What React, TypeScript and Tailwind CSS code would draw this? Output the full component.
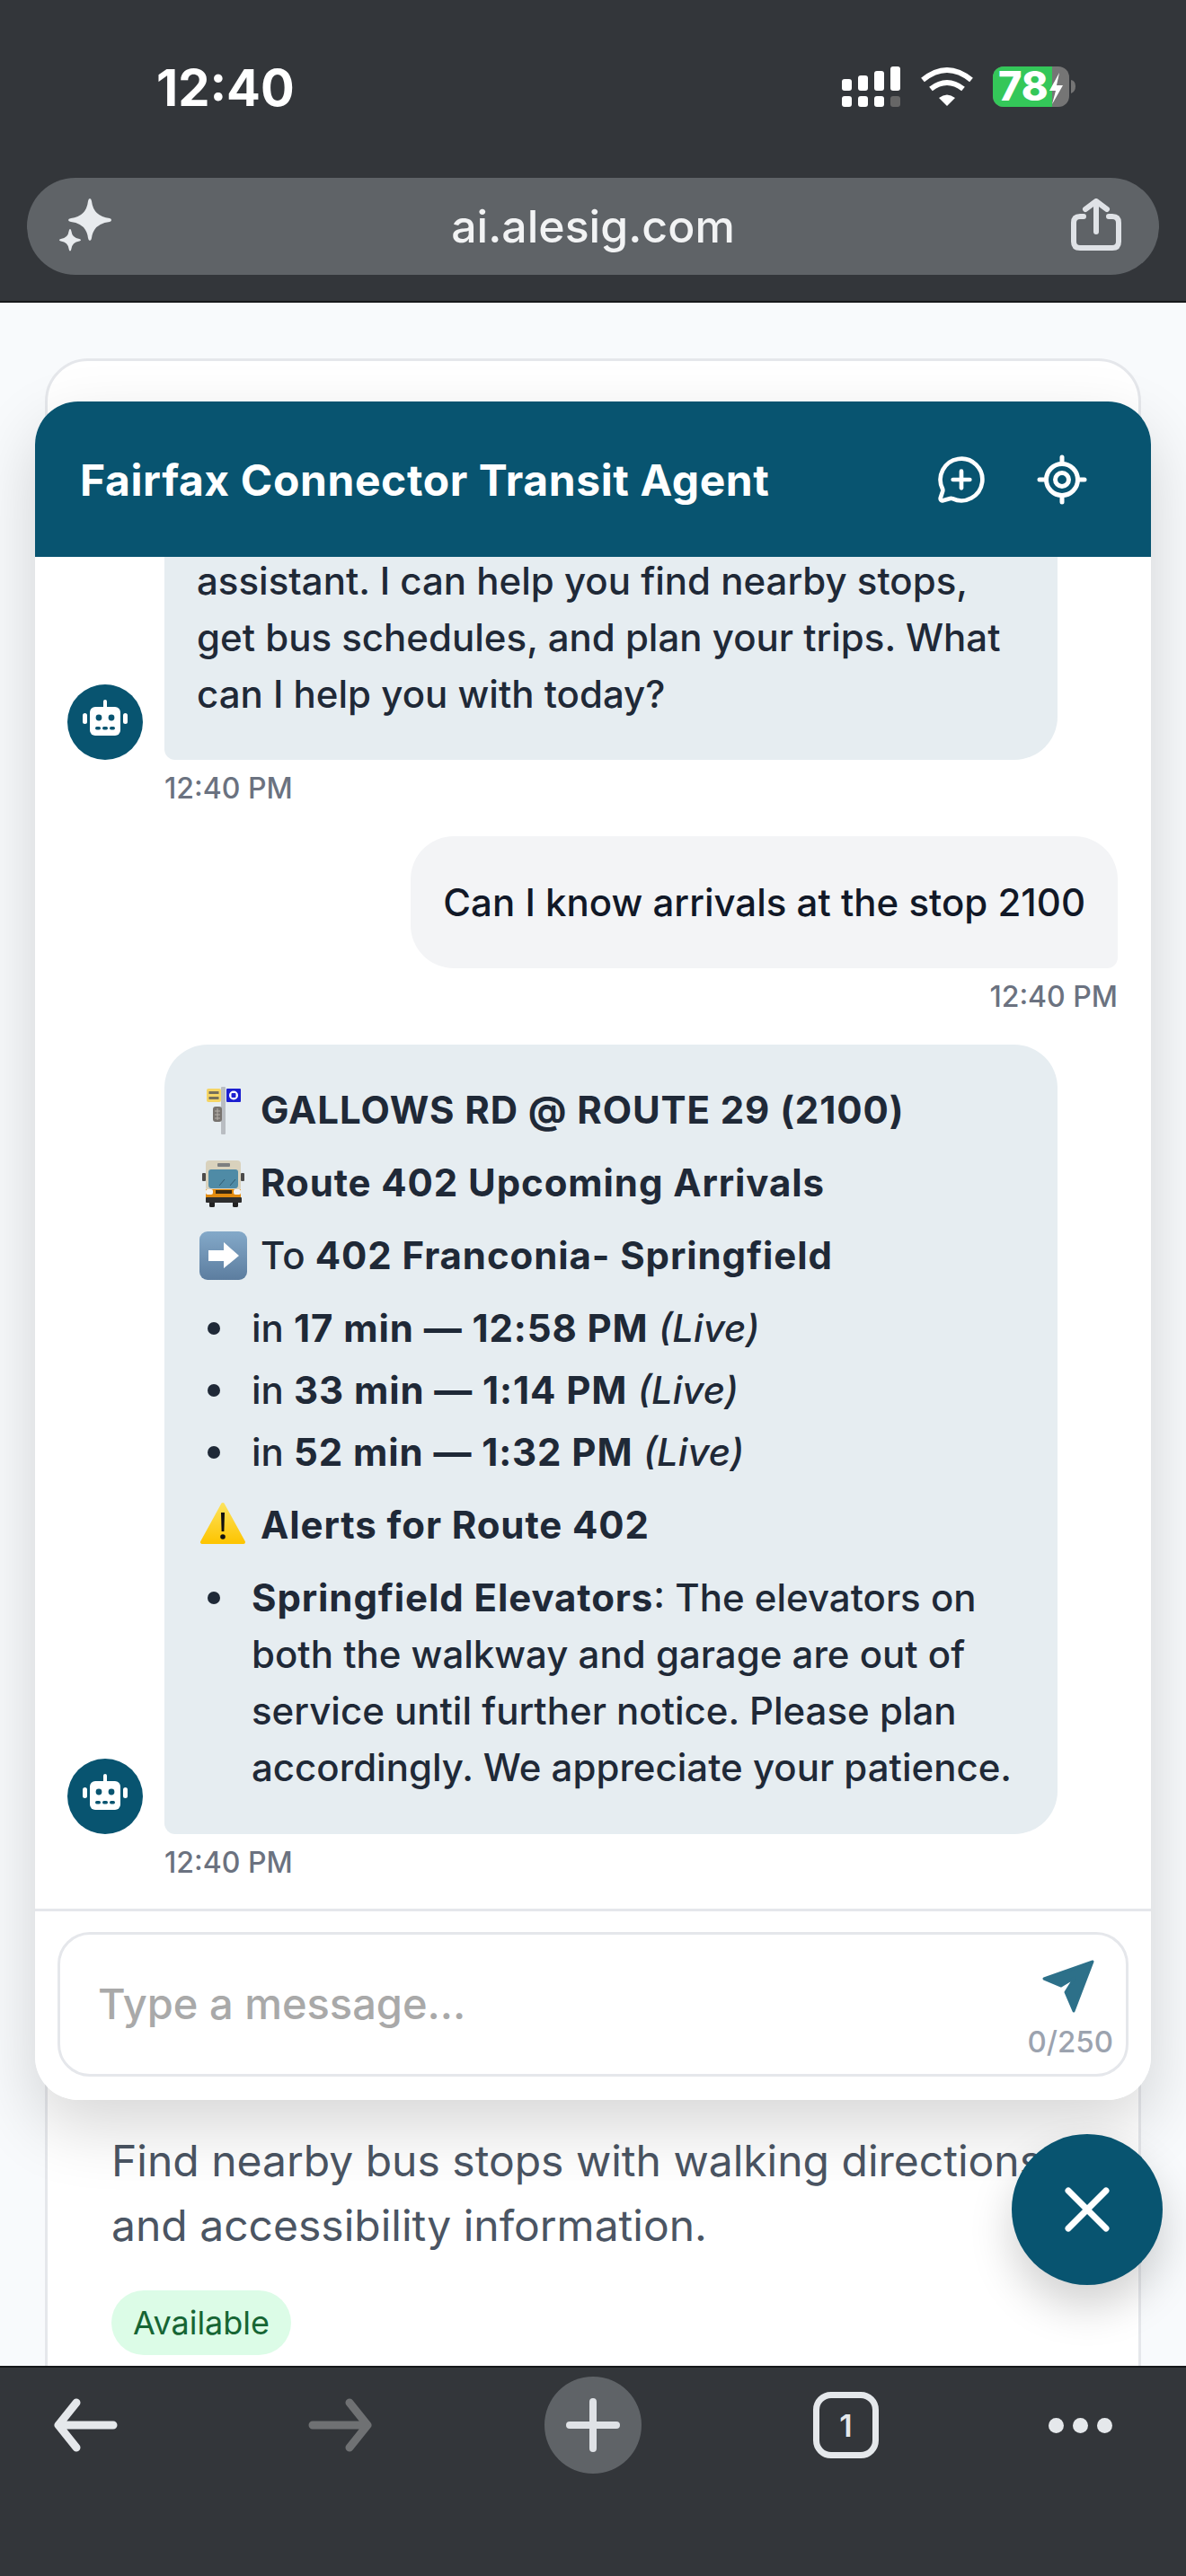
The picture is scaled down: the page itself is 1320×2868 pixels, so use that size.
import React from 'react';
import { LocateFixed, MessageCirclePlus, X } from 'lucide-react';

const Robot = () => (
    <div className="w-[84px] h-[84px] shrink-0 rounded-full bg-[#085470] flex items-center justify-center">
        <svg width="56" height="56" viewBox="0 0 56 56">
            <rect x="26" y="3" width="4" height="12" rx="2" fill="#fff" />
            <rect x="11" y="11" width="34" height="32" rx="6" fill="#fff" />
            <rect x="3" y="18" width="5" height="12" rx="2.5" fill="#fff" />
            <rect x="48" y="18" width="5" height="12" rx="2.5" fill="#fff" />
            <circle cx="21" cy="23" r="3.4" fill="#085470" />
            <circle cx="35" cy="23" r="3.4" fill="#085470" />
            <rect x="17" y="33" width="6" height="3.4" rx="1.7" fill="#085470" />
            <rect x="25" y="33" width="6" height="3.4" rx="1.7" fill="#085470" />
            <rect x="33" y="33" width="6" height="3.4" rx="1.7" fill="#085470" />
        </svg>
    </div>
);

const StopEmoji = () => (
    <svg width="56" height="56" viewBox="0 0 56 56" className="shrink-0 mr-[14px]">
        <rect x="26" y="2" width="5" height="53" rx="1" fill="#b9bdc2" />
        <rect x="10" y="4" width="16" height="15" rx="2" fill="#f5d565" />
        <rect x="12.5" y="7" width="11" height="3" fill="#77705a" />
        <rect x="12.5" y="13" width="11" height="3" fill="#77705a" />
        <rect x="32" y="4" width="16" height="15" rx="1" fill="#1c1fd0" />
        <circle cx="40" cy="11.5" r="5" fill="#fff" />
        <rect x="37.5" y="9" width="5" height="5" rx="1" fill="#1c1fd0" />
        <rect x="17" y="24" width="10" height="17" rx="3" fill="#77736f" />
        <path d="M19 29h6M19 33h6M19 37h6M22 26v13" stroke="#b5b0aa" strokeWidth="1" />
    </svg>
);

const BusEmoji = () => (
    <svg width="56" height="56" viewBox="0 0 56 56" className="shrink-0 mr-[14px]">
        <rect x="5" y="17" width="4" height="9" rx="1" fill="#4b4b4b" />
        <rect x="48" y="17" width="4" height="9" rx="1" fill="#4b4b4b" />
        <rect x="13" y="46" width="6" height="9" rx="1.5" fill="#222" />
        <rect x="39" y="46" width="6" height="9" rx="1.5" fill="#222" />
        <rect x="9" y="3" width="39" height="34" rx="4" fill="#d9d2bd" />
        <rect x="22" y="6" width="14" height="4" rx="1" fill="#7d7f80" />
        <path d="M12 16q0-3 3-3h27q3 0 3 3v14q0 4-3 4H15q-3 0-3-4Z" fill="#4f8ba6" />
        <path d="M24 31l6-7M36 31l6-7" stroke="#2f5a70" strokeWidth="1" />
        <rect x="9" y="35" width="39" height="10" fill="#e08a10" />
        <rect x="20" y="36" width="18" height="4" fill="#3a2a12" />
        <rect x="9" y="35" width="8" height="6" rx="2" fill="#f2f2f2" />
        <rect x="40" y="35" width="8" height="6" rx="2" fill="#f2f2f2" />
        <rect x="9" y="44" width="40" height="6" rx="1" fill="#2e2e2e" />
    </svg>
);

const ArrowEmoji = () => (
    <svg width="56" height="56" viewBox="0 0 56 56" className="shrink-0 mr-[14px]">
        <defs>
            <linearGradient id="tile" x1="0" y1="0" x2="0" y2="1">
                <stop offset="0" stopColor="#84a9c9" />
                <stop offset="1" stopColor="#5c7d9f" />
            </linearGradient>
        </defs>
        <rect x="2" y="1" width="53" height="54" rx="9" fill="url(#tile)" />
        <path d="M12 22h17v-9l17 15-17 14v-8H12Z" fill="#fff" />
    </svg>
);

const WarnEmoji = () => (
    <svg width="56" height="56" viewBox="0 0 56 56" className="shrink-0 mr-[14px]">
        <defs>
            <linearGradient id="warn" x1="0" y1="0" x2="0" y2="1">
                <stop offset="0" stopColor="#fde25a" />
                <stop offset="1" stopColor="#fdc503" />
            </linearGradient>
        </defs>
        <path d="M28 5 5 47h46Z" fill="url(#warn)" stroke="url(#warn)" strokeWidth="4" strokeLinejoin="round" />
        <path d="M26 14h4l-.6 21h-2.8Z" fill="#111" />
        <circle cx="28" cy="41" r="2.8" fill="#111" />
    </svg>
);

const Time = ({ right }: { right?: boolean }) => (
    <div className={`text-[32px] leading-[45px] text-[#6b7280] mt-[9px] ${right ? 'text-right' : 'pl-[108px]'}`}>12:40 PM</div>
);

const Bullet = ({ children }: { children: React.ReactNode }) => (
    <li className="flex">
        <span className="w-[14px] h-[14px] shrink-0 rounded-full bg-[#1f2937] mt-[25px] ml-[11px] mr-[35px]" />
        <div>{children}</div>
    </li>
);

export default function App() {
    return (
        <div className="relative w-[1320px] h-[2868px] overflow-hidden bg-[#f8fafc] font-['Inter',sans-serif] text-[#1f2937]">
            {/* Browser top */}
            <div className="h-[337px] bg-[#33363a] px-[30px] border-b-2 border-[#16181a]">
                <div className="h-[198px] flex items-start">
                    <span className="ml-[144px] mt-[66px] text-[56px] leading-[64px] font-bold text-white">12:40</span>
                    <svg width="265" height="50" viewBox="935 72 265 50" className="ml-auto mt-[72px] mr-[90px]">
                        <g fill="#fff">
                            <rect x="937" y="88" width="11" height="13" rx="3" />
                            <rect x="955" y="84" width="11" height="17" rx="3" />
                            <rect x="973" y="79" width="11" height="22" rx="3" />
                            <rect x="991" y="74" width="11" height="27" rx="3" />
                            <rect x="937" y="107" width="11" height="12" rx="3" />
                            <rect x="955" y="107" width="11" height="12" rx="3" />
                            <rect x="973" y="107" width="11" height="12" rx="3" />
                        </g>
                        <rect x="991" y="107" width="11" height="12" rx="3" fill="#666" />
                        <g fill="none" stroke="#fff" strokeWidth="6">
                            <path d="M1027 89q27-22 54 0" />
                            <path d="M1036 99q18-14 36 0" />
                        </g>
                        <path d="M1045 109q9-7 18 0l-9 9Z" fill="#fff" />
                        <rect x="1105" y="74" width="85" height="45" rx="12" fill="#757575" />
                        <path d="M1117 74h54v45h-54a12 12 0 0 1-12-12V86a12 12 0 0 1 12-12Z" fill="#34c759" />
                        <path d="M1192 89q5 1 5 7t-5 8Z" fill="#757575" />
                        <text x="1111" y="112" fontSize="45" fontWeight="800" fill="#fff" fontFamily="Inter, sans-serif">78</text>
                        <path d="M1179 81l-11 20h7l-4 15 12-21h-7Z" fill="#fff" />
                    </svg>
                </div>
                <div className="h-[108px] rounded-[54px] bg-[#5f6367] flex items-center justify-center relative">
                    <svg width="70" height="70" viewBox="0 0 70 70" className="absolute left-[32px] top-[22px]">
                        <path d="M38 1q1.500 0 2 3 2 17 20 19 2 .5 2 2t-2 2q-18 2-20 18-.5 3-2 3t-2-3q-2-16-19-18-3-.5-3-2t3-2q17-2 19-19 .5-3 2-3Z" fill="#e8ebee" />
                        <path d="M16 35q1 0 1.300 2 1 8 9 9 1.700.3 1.700 1.200t-1.700 1.200q-8 1-9 9-.3 2-1.300 2t-1.300-2q-1-8-9-9Q4 48.100 4 47.200T5.700 46q8-1 9-9 .3-2 1.300-2Z" fill="#e8ebee" />
                    </svg>
                    <span className="text-[50px] leading-[58px] font-medium text-[#f2f3f4]">ai.alesig.com</span>
                    <svg width="60" height="64" viewBox="0 0 60 64" className="absolute right-[40px] top-[23px]" fill="none" stroke="#dfe2e6" strokeWidth="6" strokeLinecap="round" strokeLinejoin="round">
                        <path d="M16 20H12q-7 0-7 7v21q0 7 7 7h36q7 0 7-7V27q0-7-7-7h-4" />
                        <path d="M30 37V3M18 12l12-9 12 9" />
                    </svg>
                </div>
            </div>

            {/* Page behind the chat */}
            <main className="h-[2297px] overflow-hidden px-[50px] pt-[62px]">
                <div className="h-[2300px] bg-white border-[3px] border-[#e5e7eb] rounded-[48px] flex flex-col justify-end px-[71px] pb-[74px]">
                    <p className="text-[48px] leading-[72px] text-[#4b5563] whitespace-nowrap">Find nearby bus stops with walking directions</p>
                    <p className="text-[48px] leading-[72px] text-[#4b5563]">and accessibility information.</p>
                    <span className="mt-[36px] w-fit rounded-full bg-[#dcfce7] text-[#166534] text-[36px] leading-[72px] px-[24px]">Available</span>
                </div>
            </main>

            {/* Chat panel */}
            <div className="absolute left-[39px] top-[447px] w-[1242px] h-[1891px] rounded-[48px] shadow-[0_30px_75px_rgba(0,0,0,0.16)]" />
            <section className="absolute left-[39px] top-[447px] w-[1242px] h-[1891px] flex flex-col rounded-[48px] bg-white overflow-hidden">
                <header className="h-[173px] shrink-0 bg-[#085470] flex items-center px-[50px] text-white z-10">
                    <h1 className="text-[48px] font-bold leading-[60px] tracking-[0.6px] mt-[2px]">Fairfax Connector Transit Agent</h1>
                    <MessageCirclePlus size={56} strokeWidth={2} className="ml-auto" />
                    <LocateFixed size={60} strokeWidth={2} className="ml-[54px] mr-[19px]" />
                </header>

                <div className="flex-1 min-h-0 overflow-hidden flex flex-col justify-end pl-[36px] pr-[37px] text-[42px] leading-[63px] font-medium pb-[29px]">
                    <div className="flex items-end gap-[24px]">
                        <Robot />
                        <div className="w-[994px] bg-[#e6edf1] rounded-[48px] rounded-bl-[12px] px-[36px] pt-[41px] pb-[42px]">
                            Hello! I'm your Fairfax Connector transit assistant. I can help you find nearby stops, get bus schedules, and plan your trips. What can I help you with today?
                        </div>
                    </div>
                    <Time />

                    <div className="self-end mt-[31px] bg-[#f3f4f6] text-[#111827] rounded-[48px] rounded-br-[12px] px-[36px] py-[42px]">
                        Can I know arrivals at the stop 2100
                    </div>
                    <Time right />

                    <div className="flex items-end gap-[24px] mt-[31px]">
                        <Robot />
                        <div className="w-[994px] bg-[#e6edf1] rounded-[48px] rounded-bl-[12px] px-[37px] pt-[41px] pb-[43px]">
                            <p className="flex items-center font-bold tracking-[0.9px] mb-[18px]"><StopEmoji />GALLOWS RD @ ROUTE 29 (2100)</p>
                            <p className="flex items-center font-bold tracking-[0.9px] mb-[18px]"><BusEmoji />Route 402 Upcoming Arrivals</p>
                            <p className="flex items-center mb-[18px]"><ArrowEmoji /><span>To <strong className="font-bold tracking-[0.9px]">402 Franconia- Springfield</strong></span></p>
                            <ul className="mb-[18px] space-y-[6px]">
                                <Bullet>in <strong className="font-bold tracking-[0.9px]">17 min — 12:58 PM</strong> <em>(Live)</em></Bullet>
                                <Bullet>in <strong className="font-bold tracking-[0.9px]">33 min — 1:14 PM</strong> <em>(Live)</em></Bullet>
                                <Bullet>in <strong className="font-bold tracking-[0.9px]">52 min — 1:32 PM</strong> <em>(Live)</em></Bullet>
                            </ul>
                            <p className="flex items-center font-bold tracking-[0.9px] mb-[18px]"><WarnEmoji />Alerts for Route 402</p>
                            <ul>
                                <Bullet><strong className="font-bold tracking-[0.9px]">Springfield Elevators</strong>: The elevators on both the walkway and garage are out of service until further notice. Please plan accordingly. We appreciate your patience.</Bullet>
                            </ul>
                        </div>
                    </div>
                    <Time />
                </div>

                <div className="h-[213px] shrink-0 border-t-[3px] border-[#e5e7eb] px-[25px] pt-[23px]">
                    <div className="relative h-[161px] border-[3px] border-[#e5e7eb] rounded-[36px] flex items-center pl-[42px]">
                        <input readOnly placeholder="Type a message..." className="w-[900px] text-[47px] font-medium outline-none bg-transparent placeholder:text-[#a9a9a9]" />
                        <svg width="60" height="60" viewBox="0 0 60 60" className="absolute right-[34px] top-[28px]" fill="#2d7089" stroke="#2d7089" strokeWidth="3" strokeLinejoin="round">
                            <path d="M57 2 3 21l19 8 15-9-10 16 9 21Z" />
                        </svg>
                        <span className="absolute right-[14px] bottom-[16px] text-[33px] leading-[40px] font-medium text-[#9ca3af]">0/250</span>
                    </div>
                </div>
            </section>

            {/* Close button */}
            <button className="absolute left-[1126px] top-[2376px] w-[168px] h-[168px] rounded-full bg-[#085470] flex items-center justify-center text-white shadow-[0_24px_48px_rgba(0,0,0,0.18)]">
                <X size={84} strokeWidth={2} />
            </button>

            {/* Browser bottom */}
            <nav className="h-[234px] bg-[#33363a] border-t-2 border-[#16181a] relative">
                <div className="flex items-start justify-between h-[120px] pt-[10px] pl-[58px] pr-[82px]">
                    <svg width="74" height="60" viewBox="0 0 74 60" className="mt-[24px]" fill="none" stroke="#e5e8eb" strokeWidth="9" strokeLinecap="round" strokeLinejoin="round">
                        <path d="M68 30H7M27 5 7 30l20 25" />
                    </svg>
                    <svg width="74" height="60" viewBox="0 0 74 60" className="mt-[24px] ml-[210px]" fill="none" stroke="#6f7173" strokeWidth="9" strokeLinecap="round" strokeLinejoin="round">
                        <path d="M6 30h61M47 5l20 25-20 25" />
                    </svg>
                    <div className="w-[108px] h-[108px] rounded-full bg-[#5f6367] ml-[190px] flex items-center justify-center">
                        <svg width="60" height="60" viewBox="0 0 60 60" stroke="#dfe2e6" strokeWidth="8" strokeLinecap="round">
                            <path d="M30 4v52M4 30h52" />
                        </svg>
                    </div>
                    <div className="w-[73px] h-[74px] mt-[17px] ml-[191px] rounded-[20px] border-[7px] border-[#e5e8eb] flex items-center justify-center text-[34px] font-semibold text-[#e5e8eb]">1</div>
                    <div className="flex gap-[10px] mt-[46px] ml-auto">
                        <span className="w-[17px] h-[17px] rounded-full bg-[#e5e8eb]" />
                        <span className="w-[17px] h-[17px] rounded-full bg-[#e5e8eb]" />
                        <span className="w-[17px] h-[17px] rounded-full bg-[#e5e8eb]" />
                    </div>
                </div>
            </nav>
        </div>
    );
}
